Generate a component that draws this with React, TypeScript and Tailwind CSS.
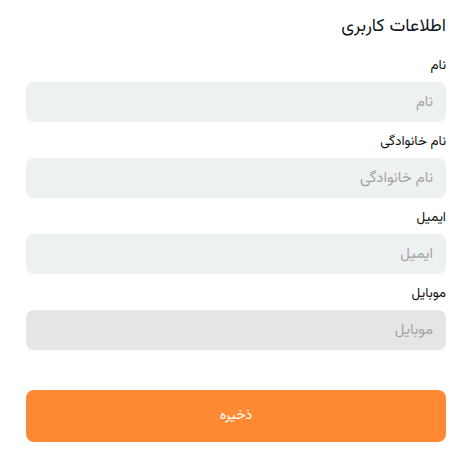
import React from "react";

const fields = [
  { label: "نام", disabled: false },
  { label: "نام خانوادگی", disabled: false },
  { label: "ایمیل", disabled: false },
  { label: "موبایل", disabled: true },
];

const font = '"Vazirmatn", "Noto Sans Arabic", "DejaVu Sans", sans-serif';

export default function App() {
  return (
    <div
      dir="rtl"
      className="w-[467px] h-[459px] bg-white pr-[21px] pl-[26px] pt-[13px]"
      style={{ fontFamily: font }}
    >
      <h1 className="text-[18px] leading-[28px] text-[#111827] font-normal">اطلاعات کاربری</h1>
      <div className="mt-[15px] flex flex-col gap-[10px]">
        {fields.map((f) => (
          <div key={f.label} className="flex flex-col gap-[6px]">
            <label className="text-[13.5px] leading-[20px] text-[#111]">{f.label}</label>
            <input
              disabled={f.disabled}
              placeholder={f.label}
              className={`h-[40px] w-full rounded-lg px-[13px] text-[15px] outline-none placeholder:text-[#a3a3a3] ${
                f.disabled ? "bg-[#e5e5e5]" : "bg-[#eef1f2]"
              }`}
              style={{ fontFamily: font }}
            />
          </div>
        ))}
      </div>
      <button className="mt-[40px] h-[52px] w-full rounded-lg bg-[#ff8a33] text-[14px] text-white">
        ذخیره
      </button>
    </div>
  );
}
